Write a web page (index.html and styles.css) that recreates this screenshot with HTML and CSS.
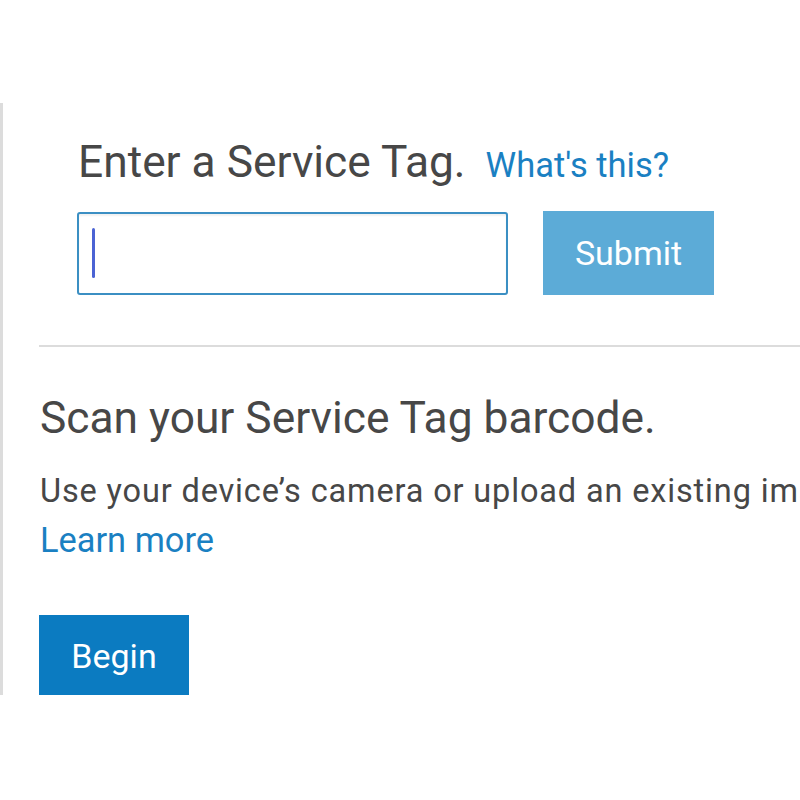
FILE: index.html
```html
<!DOCTYPE html>
<html lang="en">
<head>
<meta charset="utf-8">
<title>Service Tag</title>
<link rel="stylesheet" href="styles.css">
</head>
<body>
<div class="page">
  <div class="panel">
    <div class="tag-block">
      <div class="tag-title-row">
        <h2 class="tag-title">Enter a Service Tag.</h2>
        <a class="link whats-this" href="#">What's this?</a>
      </div>
      <div class="tag-form">
        <div class="tag-input"><span class="caret"></span></div>
        <button class="btn btn-submit" type="button">Submit</button>
      </div>
    </div>
    <hr class="divider">
    <div class="scan-block">
      <h2 class="scan-title">Scan your Service Tag barcode.</h2>
      <p class="scan-text">Use your device’s camera or upload an existing image of your Service Tag barcode.</p>
      <a class="link learn-more" href="#">Learn more</a>
      <button class="btn btn-begin" type="button">Begin</button>
    </div>
  </div>
</div>
</body>
</html>
```

FILE: styles.css
```css
html, body {
  margin: 0;
  padding: 0;
  background: #ffffff;
  overflow: hidden;
}
body {
  font-family: Roboto, "Noto Sans", "Liberation Sans", sans-serif;
  color: #474747;
  width: 800px;
  height: 800px;
}
.page {
  padding-top: 103px;
}
.panel {
  border-left: 3px solid #dcdcdc;
  padding-left: 37px;
  padding-top: 32px;
  height: 560px;
  display: flex;
  flex-direction: column;
  overflow: hidden;
}
.tag-block {
  padding-left: 38px;
}
.tag-title-row {
  display: flex;
  align-items: baseline;
  gap: 20px;
}
.tag-title {
  margin: 0;
  font-size: 44.3px;
  font-weight: 400;
  line-height: 54px;
  color: #474747;
}
.link {
  color: #1a80c2;
  text-decoration: none;
}
.whats-this {
  font-size: 34.5px;
}
.tag-form {
  display: flex;
  align-items: center;
  gap: 35px;
  margin-top: 22px;
}
.tag-input {
  box-sizing: border-box;
  width: 431px;
  height: 83px;
  border: 2px solid #3b8fc3;
  border-radius: 3px;
  box-shadow: inset 0 2px 2px rgba(0,0,0,0.06);
  display: flex;
  align-items: center;
  padding-left: 13px;
  margin-left: -1px;
}
.caret {
  width: 3px;
  height: 50px;
  border-radius: 2px;
  background: #4b63d4;
}
.btn {
  border: none;
  color: #ffffff;
  font-family: Roboto, "Noto Sans", "Liberation Sans", sans-serif;
  font-size: 34px;
  padding: 0;
}
.btn-submit {
  width: 171px;
  height: 84px;
  background: #5cabd7;
}
.divider {
  border: none;
  height: 2px;
  background: #dcdcdc;
  margin: 50px -40px 0 -1px;
  flex-shrink: 0;
}
.scan-block {
  display: flex;
  flex-direction: column;
  align-items: flex-start;
}
.scan-title {
  margin: 45px 0 0 0;
  font-size: 44.3px;
  font-weight: 400;
  line-height: 52px;
  color: #474747;
}
.scan-text {
  margin: 27px 0 0 0;
  font-size: 32.5px;
  letter-spacing: 0.85px;
  line-height: 40px;
  white-space: nowrap;
  color: #474747;
}
.learn-more {
  font-size: 34.4px;
  line-height: 44px;
  margin-top: 7px;
}
.btn-begin {
  width: 150px;
  height: 81px;
  background: #0b7bc1;
  margin-top: 53px;
  margin-left: -1px;
}
```
